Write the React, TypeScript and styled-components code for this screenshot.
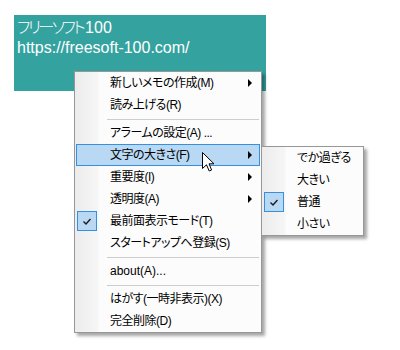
import styled, { createGlobalStyle } from "styled-components";

const GlobalStyle = createGlobalStyle`
  html, body {
    margin: 0;
    padding: 0;
    background: #ffffff;
  }
  body {
    font-family: "Liberation Sans", "Noto Sans CJK JP", sans-serif;
  }
`;

const Page = styled.div`
  position: relative;
  width: 400px;
  height: 350px;
  overflow: hidden;
  padding: 15px 0 0 14px;
  box-sizing: border-box;
`;

const Sticky = styled.div`
  width: 252px;
  height: 76px;
  box-sizing: border-box;
  padding: 3px 3px;
  background: #34a3a0;
  color: #ffffff;
  font-size: 16px;
  line-height: 20px;
  font-feature-settings: "palt";
`;

const Kana = styled.span`
  letter-spacing: -2.5px;
  margin-right: 2px;
  font-weight: 300;
`;

const Menu = styled.div<{ $left: number; $top: number; $width: number }>`
  position: absolute;
  left: ${({ $left }) => $left}px;
  top: ${({ $top }) => $top}px;
  width: ${({ $width }) => $width}px;
  box-sizing: border-box;
  border: 1px solid #979797;
  background: linear-gradient(
    to right,
    #ececec 0,
    #f6f6f6 23px,
    #fcfcfc 24px
  );
  box-shadow: 3px 3px 3px rgba(0, 0, 0, 0.35);
  font-family: "Liberation Sans", "Noto Sans CJK JP", sans-serif;
  font-size: 12px;
  font-feature-settings: "palt";
  color: #000000;
`;

const Item = styled.div<{ $hot?: boolean }>`
  display: flex;
  align-items: center;
  height: 22px;
  box-sizing: border-box;
  margin: 0 1px;
  padding-right: 7px;
  border: 1px solid ${({ $hot }) => ($hot ? "#3591e0" : "transparent")};
  background: ${({ $hot }) => ($hot ? "#b9d8f4" : "transparent")};
`;

const CheckCell = styled.div`
  width: 20px;
  height: 20px;
  flex: 0 0 auto;
  display: flex;
  align-items: center;
  justify-content: center;
`;

const CheckBox = styled(CheckCell)`
  box-sizing: border-box;
  border: 1px solid #3591e0;
  background: #b9d8f4;
`;

const Label = styled.span<{ $latin?: boolean }>`
  flex: 1;
  padding-left: 13px;
  white-space: nowrap;
  line-height: 20px;
  letter-spacing: ${({ $latin }) => ($latin ? "0" : "-0.5px")};
`;

const Arrow = styled.span`
  width: 0;
  height: 0;
  border-left: 4px solid #000000;
  border-top: 4px solid transparent;
  border-bottom: 4px solid transparent;
`;

const Separator = styled.div`
  height: 6px;
  display: flex;
  align-items: center;
  padding-left: 32px;
  padding-right: 2px;

  &::after {
    content: "";
    flex: 1;
    height: 1px;
    background: #cdcdcd;
  }
`;

const Cursor = styled.svg`
  position: absolute;
  left: 202px;
  top: 152px;
`;

const Check = () => (
  <svg width="8" height="7" viewBox="0 0 8 7">
    <path d="M0.5 3.5 L3 6 L7.5 1" fill="none" stroke="#1a1a1a" strokeWidth="1.4" />
  </svg>
);

interface RowProps {
  label: string;
  sub?: boolean;
  hot?: boolean;
  checked?: boolean;
  latin?: boolean;
}

const Row = ({ label, sub, hot, checked, latin }: RowProps) => (
  <Item $hot={hot}>
    {checked ? (
      <CheckBox>
        <Check />
      </CheckBox>
    ) : (
      <CheckCell />
    )}
    <Label $latin={latin}>{label}</Label>
    {sub && <Arrow />}
  </Item>
);

export default function App() {
  return (
    <>
      <GlobalStyle />
      <Page>
        <Sticky>
          <Kana>フリーソフト</Kana>100
          <br />
          https://freesoft-100.com/
        </Sticky>

        <Menu $left={74} $top={71} $width={188}>
          <Row label="新しいメモの作成(M)" sub />
          <Row label="読み上げる(R)" />
          <Separator />
          <Row label="アラームの設定(A) ..." />
          <Row label="文字の大きさ(F)" sub hot />
          <Row label="重要度(I)" sub />
          <Row label="透明度(A)" sub />
          <Row label="最前面表示モード(T)" checked />
          <Row label="スタートアップへ登録(S)" />
          <Separator />
          <Row label="about(A)..." latin />
          <Separator />
          <Row label="はがす(一時非表示)(X)" />
          <Row label="完全削除(D)" />
        </Menu>

        <Menu $left={261} $top={146} $width={103}>
          <Row label="でか過ぎる" />
          <Row label="大きい" />
          <Row label="普通" checked />
          <Row label="小さい" />
        </Menu>

        <Cursor width="13" height="21" viewBox="0 0 13 21">
          <path
            d="M0.5 0.5 L0.5 16.5 L4.5 12.8 L7.2 19 L9.6 18 L7 11.8 L12 11.8 Z"
            fill="#ffffff"
            stroke="#000000"
            strokeWidth="1"
            strokeLinejoin="miter"
          />
        </Cursor>
      </Page>
    </>
  );
}
